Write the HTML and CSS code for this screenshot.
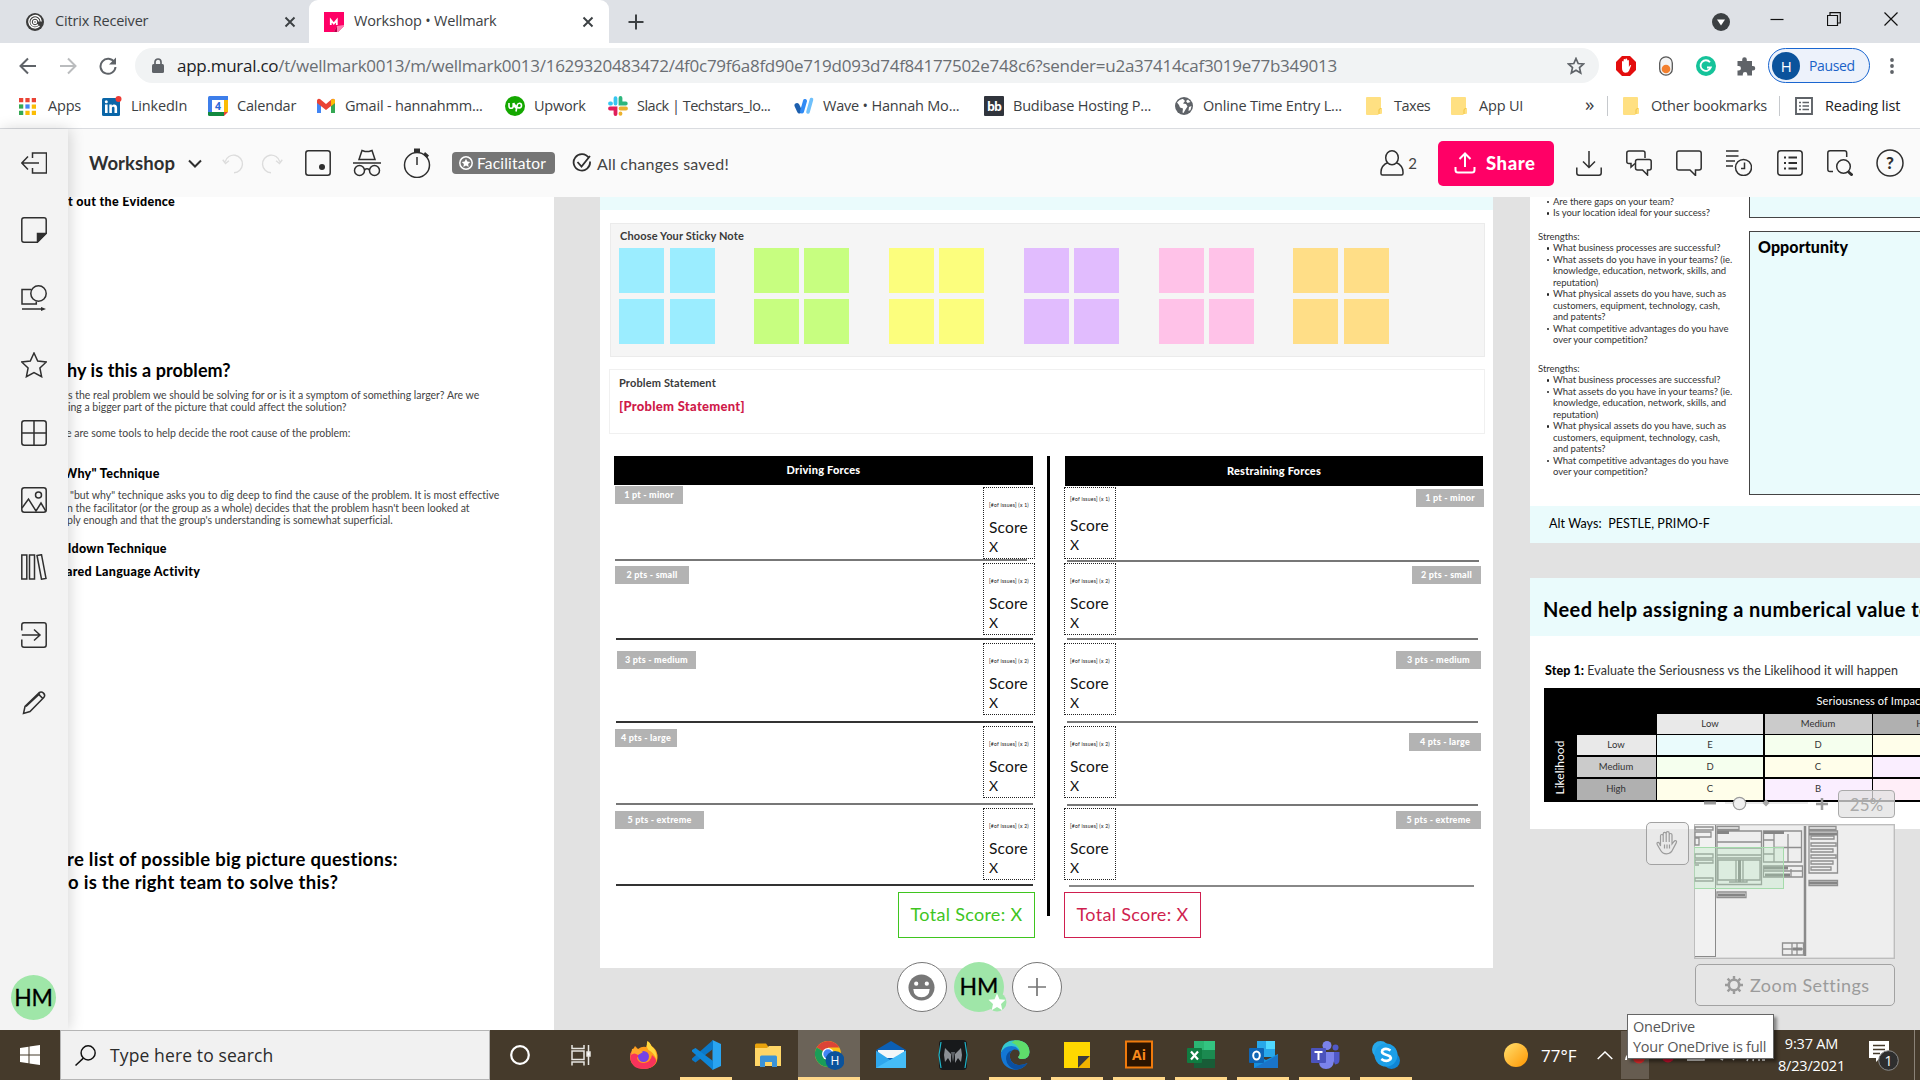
FILE: index.html
```html
<!DOCTYPE html>
<html lang="en">
<head>
<meta charset="utf-8">
<title>Workshop • Wellmark</title>
<link rel="stylesheet" href="styles.css">
</head>
<body>
<div class="screen">
<header class="chrome">
  <div class="tabs">
    <div class="tab tab-idle">
      <svg class="i18" viewBox="0 0 18 18"><circle cx="9" cy="9" r="9" fill="#3c3c3c"/><g fill="none" stroke="#fff" stroke-width="1.4"><path d="M13.5 13a6.2 6.2 0 1 1 1.7-4.500"/><path d="M12 11.500a3.900 3.900 0 1 1 .9-3"/><circle cx="9" cy="9" r="1.500"/></g></svg>
      <span class="tab-name">Citrix Receiver</span>
      <svg class="x" viewBox="0 0 12 12"><path d="M1.500 1.500l9 9M10.500 1.500l-9 9"/></svg>
    </div>
    <div class="tab tab-on">
      <svg class="i20" viewBox="0 0 20 20"><path d="M0 0h20v14l-6 6H0z" fill="#ff0066"/><path d="M10 20l3-6 7-1v1l-6 6z" fill="#ff7fb2"/><path d="M10 20l3-6v6z" fill="#b8004a"/><path d="M6.800 13V8l3 3.500 3-3.500v5" fill="none" stroke="#fff" stroke-width="1.800"/></svg>
      <span class="tab-name">Workshop • Wellmark</span>
      <svg class="x" viewBox="0 0 12 12"><path d="M1.500 1.500l9 9M10.500 1.500l-9 9"/></svg>
    </div>
    <svg class="new-tab" viewBox="0 0 16 16"><path d="M8 0.500v15M0.500 8h15"/></svg>
    <div class="win">
      <svg class="i18" viewBox="0 0 18 18"><circle cx="9" cy="9" r="9" fill="#3c4043"/><path d="M5 6.500h8l-4 6z" fill="#fff"/></svg>
      <svg class="wb" viewBox="0 0 14 14"><path d="M0.500 7.500h13"/></svg>
      <svg class="wb" viewBox="0 0 14 14"><path d="M0.500 3.500h10v10h-10zM3 3V0.700h10.300V11H11"/></svg>
      <svg class="wb" viewBox="0 0 14 14"><path d="M0.500 0.500l13 13M13.500 0.500l-13 13"/></svg>
    </div>
  </div>
  <div class="nav">
    <svg class="nv" viewBox="0 0 18 18"><path d="M17 9H2M9 1.500L1.500 9 9 16.500"/></svg>
    <svg class="nv dim" viewBox="0 0 18 18"><path d="M1 9h15M9 1.500L16.500 9 9 16.500"/></svg>
    <svg class="nv" viewBox="0 0 18 18"><path d="M15.500 5.500A7.500 7.500 0 1 0 16.500 10"/><path d="M17 .5v7h-7z" fill="#5f6368" stroke="none"/></svg>
    <div class="omni">
      <svg class="lock" viewBox="0 0 12 16"><rect y="6" width="12" height="9" rx="1.500" fill="#5f6368"/><path d="M3 6V4a3 3 0 0 1 6 0v2" fill="none" stroke="#5f6368" stroke-width="1.700"/></svg>
      <span class="url"><b>app.mural.co</b>/t/wellmark0013/m/wellmark0013/1629320483472/4f0c79f6a8fd90e719d093d74f84177502e748c6?sender=u2a37414caf3019e77b349013</span>
      <svg class="i18 star" viewBox="0 0 18 18"><path d="M9 1.500l2.200 5 5.300.5-4 3.600 1.200 5.400L9 13.200 4.300 16l1.200-5.400-4-3.600 5.300-.5z" fill="none" stroke="#5f6368" stroke-width="1.700"/></svg>
    </div>
    <div class="exts">
      <svg class="i20" viewBox="0 0 20 20"><path d="M6 0h8l6 6v8l-6 6H6l-6-6V6z" fill="#e40d0d"/><path d="M6 12V6q0-1 .8-1t.8 1V4q0-1 .9-1t.9 1v-.7q0-.9.900-.9t.9.900V5q0-.9.900-.9t.8.900v6l.9-1.500q.6-.8 1.400-.2l-2.200 5.500q-.8 2-3.300 2Q6 16.800 6 12z" fill="#fff"/></svg>
      <svg class="i20" viewBox="0 0 20 20"><rect x="3.700" y=".8" width="12.600" height="18.400" rx="6.300" fill="#f4f4f4" stroke="#555" stroke-width="1.300"/><circle cx="10" cy="13" r="4.300" fill="#f37f2e"/></svg>
      <svg class="i20" viewBox="0 0 20 20"><circle cx="10" cy="10" r="10" fill="#15c39a"/><path d="M14 6.200a5.300 5.300 0 1 0 .8 5.300H11" fill="none" stroke="#fff" stroke-width="1.800"/></svg>
      <svg class="i20" viewBox="0 0 20 20"><path d="M1.500 5h4.700V3.500a2.300 2.300 0 0 1 4.600 0V5H16v5h1a2.200 2.200 0 0 1 0 4.500h-1v5h-4.700v-1.300a2.200 2.200 0 0 0-4.500 0v1.300H1.500v-5h1.200a2.200 2.200 0 0 0 0-4.500H1.500z" fill="#5f6368"/></svg>
    </div>
    <div class="paused"><i>H</i><span>Paused</span></div>
    <svg class="dots" viewBox="0 0 4 16"><circle cx="2" cy="2" r="1.900"/><circle cx="2" cy="8" r="1.900"/><circle cx="2" cy="14" r="1.900"/></svg>
  </div>
  <div class="marks">
    <div class="bm b-apps"><svg viewBox="0 0 16 16"><path d="M0 0h4v4H0zM6 0h4v4H6zM12 0h4v4h-4z" fill="#ea4335"/><path d="M0 6h4v4H0z" fill="#34a853"/><path d="M6 6h4v4H6z" fill="#4285f4"/><path d="M12 6h4v4h-4zM6 12h4v4H6zM12 12h4v4h-4z" fill="#fbbc04"/><path d="M0 12h4v4H0z" fill="#34a853"/></svg><span>Apps</span></div>
    <div class="bm b-in"><svg viewBox="0 0 20 20"><rect y="2" width="18" height="18" rx="1.500" fill="#0a66a8"/><path d="M3 8.500h2.600V17H3zM7.300 8.500h2.500v1.200c1.200-2 5.300-2 5.300 2V17h-2.600v-4.800c0-2-2.600-1.900-2.600 0V17H7.300z" fill="#fff"/><circle cx="4.300" cy="5.700" r="1.500" fill="#fff"/><circle cx="16.500" cy="3" r="3" fill="#ee3b34"/></svg><span>LinkedIn</span></div>
    <div class="bm b-cal"><svg viewBox="0 0 20 20"><path d="M0 1.500Q0 0 1.500 0H20v4H0z" fill="#3d7eea"/><path d="M0 4h4v12H0z" fill="#3d7eea"/><path d="M16 4h4v12h-4z" fill="#fbbc04"/><path d="M0 16h16v4H1.500Q0 20 0 18.500z" fill="#128a3f"/><path d="M16 16h4l-4 4z" fill="#ea4335"/><path d="M4 4h12v12H4z" fill="#fff"/><text x="10" y="14" text-anchor="middle" font-size="10.500" font-weight="700" font-family="Open Sans, sans-serif" fill="#2a66d8">4</text></svg><span>Calendar</span></div>
    <div class="bm b-gm"><svg viewBox="0 0 20 20"><path d="M1 4v13h4V8z" fill="#4285f4"/><path d="M19 4v13h-4V8z" fill="#34a853"/><path d="M1 4.500Q1.500 2 4 3l6 5 6-5q2.500-1 3 1.500V7l-9 7-9-7z" fill="#ea4335"/><path d="M15 4q3.500-2 4 .5V7l-4 3.200z" fill="#fbbc04"/></svg><span>Gmail - hannahmm...</span></div>
    <div class="bm b-up"><svg viewBox="0 0 20 20"><circle cx="10" cy="10" r="10" fill="#14a800"/><path d="M4 7v3.300q0 2 2 2t2.200-2V7q1 4 3.500 5.500M11 15.500l1.200-6.300q.5-2 2.300-2 2 0 2 2.300t-2.200 2.400Q11.500 12 8.500 7" fill="none" stroke="#fff" stroke-width="1.600"/></svg><span>Upwork</span></div>
    <div class="bm b-sl"><svg viewBox="0 0 20 20" fill="none" stroke-width="3.800" stroke-linecap="round"><path d="M7.500 2.200v5.300M2 7.500h1" stroke="#36c5f0"/><path d="M12.500 2v5.500h5.300" stroke="#2eb67d"/><path d="M12.500 12.500H18M12.500 17.500v.3" stroke="#ecb22e"/><path d="M2 12.500h5.500V18" stroke="#e01e5a"/></svg><span>Slack | Techstars_lo...</span></div>
    <div class="bm b-wv"><svg viewBox="0 0 20 20" fill="none" stroke-linecap="round"><path d="M3 9.500L5.500 15" stroke="#1c5fae" stroke-width="5"/><path d="M11 5L8 15.500" stroke="#2f8af5" stroke-width="4"/><path d="M17.500 3.500L14 16" stroke="#6fc0fb" stroke-width="3.600"/></svg><span>Wave • Hannah Mo...</span></div>
    <div class="bm b-bb"><svg viewBox="0 0 20 20"><rect width="20" height="20" rx="1" fill="#30343c"/><text x="10" y="15" text-anchor="middle" font-size="12.500" font-weight="700" font-family="Open Sans, sans-serif" fill="#fff" letter-spacing="-.8">bb</text></svg><span>Budibase Hosting P...</span></div>
    <div class="bm b-gl"><svg viewBox="0 0 20 20"><circle cx="10" cy="10" r="9" fill="#5f6368"/><path d="M3 6.500q3-4 6-3.500l2 2-2 2.500 3 .5 1.500 2.500-2 3-2 3.500-1-.5.500-4-3-1-1-2.500z" fill="#fff"/><path d="M14 3.500l2.500 2.500-3 1-1.500-2zM15 11l2.500-1-1 4-2 1z" fill="#fff"/></svg><span>Online Time Entry L...</span></div>
    <div class="bm b-tx"><svg viewBox="0 0 16 18"><use href="#folder"/></svg><span>Taxes</span></div>
    <div class="bm b-ui"><svg viewBox="0 0 16 18"><use href="#folder"/></svg><span>App UI</span></div>
    <div class="more">»</div>
    <div class="bm b-ot"><svg viewBox="0 0 16 18"><use href="#folder"/></svg><span>Other bookmarks</span></div>
    <div class="bm b-rl"><svg viewBox="0 0 18 18"><path d="M1 1h16v16H1z" fill="none" stroke="#5f6368" stroke-width="1.900"/><path d="M4 5.500h2M4 9h2M4 12.500h2M7.500 5.500H14M7.500 9H14M7.500 12.500H14" stroke="#5f6368" stroke-width="1.600"/></svg><span>Reading list</span></div>
  </div>
</header>
<svg class="defs"><defs>
  <g id="folder"><path d="M1 0h13q1 0 1 1v10h1v5q0 1-1 1h-2l-1 1H1q-1 0-1-1V1q0-1 1-1z" fill="#ffe082"/><path d="M13 17v-4q0-1.500 2-1.500" fill="none" stroke="#f2c744"/></g>
</defs></svg>

<main class="app">
  <aside class="rail">
    <svg class="ri" viewBox="0 0 26 26"><path d="M11.500 8V3h14v20h-14v-5M18 13H1.500M7 6.500L.8 13 7 19.500"/></svg>
    <svg class="ri" viewBox="0 0 26 26"><path d="M3 .8h20q2.200 0 2.200 2.200v13.200l-9 9H3Q.8 25.200.8 23V3Q.8.800 3 .8z"/><path d="M16.500 25v-8.500H25z" fill="#2f2f2f"/></svg>
    <svg class="ri" viewBox="0 0 26 26"><path d="M10.500 4.500H1V19h14.300v-2.500M1 24h20"/><circle cx="17.500" cy="8.500" r="7.700"/><path d="M20 22l5 2-5 2z" fill="#2f2f2f" stroke="none"/></svg>
    <svg class="ri" viewBox="0 0 26 26"><path d="M13 1l3.700 8 8.600 1-6.400 6 1.700 8.700L13 20.500l-7.600 4.200L7.100 16 .7 10l8.600-1z"/></svg>
    <svg class="ri" viewBox="0 0 26 26"><rect x=".8" y=".8" width="24.400" height="24.400" rx="2.500"/><path d="M13 1v24M1 13h24"/></svg>
    <svg class="ri" viewBox="0 0 26 26"><rect x=".8" y=".8" width="24.400" height="24.400" rx="2.500"/><circle cx="17.500" cy="8" r="3"/><path d="M1 21l6.500-9 7.500 12 5-8 5 8.500"/></svg>
    <svg class="ri" viewBox="0 0 26 26"><rect x=".8" y="1" width="5" height="24"/><rect x="8.500" y="1" width="5" height="24"/><path d="M16 1.500l4.500-.8 4.500 23.700-4.500.8z"/></svg>
    <svg class="ri" viewBox="0 0 26 26"><path d="M.8 8.500V3Q.8.800 3 .8h20q2.200 0 2.200 2.200v20q0 2.200-2.200 2.200H3Q.8 25.200.8 23v-5.500M.8 13h17M13 7.500l6 5.500-6 5.500"/></svg>
    <svg class="ri" viewBox="0 0 26 26"><path d="M2.500 24.500l1.500-7L18 3.700q2.300-1.700 4.500.4t.3 4.500L9 22.500zM17 4.800l5 4.800M5 17.500l14-13"/></svg>
    <div class="me">HM</div>
  </aside>

  <section class="work">
    <div class="bar">
      <h1 class="title">Workshop</h1>
      <svg class="chev" viewBox="0 0 14 9"><path d="M1 1.500l6 6 6-6"/></svg>
      <svg class="ti faint undo" viewBox="0 0 26 26"><path d="M13 23.500a9.500 9.500 0 1 0-9.500-12M.8 9.500l3 4 3.700-3"/></svg>
      <svg class="ti faint redo" viewBox="0 0 26 26"><path d="M13 23.500a9.500 9.500 0 1 1 9.500-12M25.200 9.500l-3 4-3.700-3"/></svg>
      <svg class="ti sq" viewBox="0 0 26 26"><rect x=".8" y=".8" width="24.400" height="24.400" rx="2.500"/><circle cx="17" cy="17" r="3" fill="#2f2f2f" stroke="none"/></svg>
      <svg class="ti inc" viewBox="0 0 28 28"><path d="M0 14h28M6 10.500L9 1.500l3 1h4l3-1 3 9z"/><circle cx="6.500" cy="21.500" r="5"/><circle cx="21.500" cy="21.500" r="5"/><path d="M11.500 21q2.500-2.500 5 0"/></svg>
      <svg class="ti tim" viewBox="0 0 28 30"><circle cx="14" cy="17" r="12.500"/><path d="M14 9v8"/><path d="M11 .5h6V4h-6zM22 4l4 3.500-2 2.500-3.500-3.500z" fill="#2f2f2f" stroke="none"/></svg>
      <div class="fac"><svg viewBox="0 0 14 14"><circle cx="7" cy="7" r="6.200" fill="none" stroke="#fff" stroke-width="1.500"/><path d="M7 2.800l1.300 2.800 3 .3-2.200 2 .6 3.100L7 9.500 4.300 11l.6-3.100-2.200-2 3-.3z" fill="#fff"/></svg><span>Facilitator</span></div>
      <svg class="ok" viewBox="0 0 20 20"><path d="M16.800 5A8.200 8.200 0 1 0 18 8.500M5.500 9l4 4.500L18 3"/></svg>
      <span class="saved">All changes saved!</span>
      <div class="right">
        <svg class="ti person" viewBox="0 0 24 26"><path d="M8 12.500Q1 15.500 1 22v1.500Q1 25 2.500 25h19q1.500 0 1.500-1.500V22q0-6.500-7-9.500"/><ellipse cx="12" cy="7.800" rx="6.300" ry="7"/></svg>
        <span class="cnt">2</span>
        <div class="share"><svg viewBox="0 0 22 22"><path d="M11 15V2M5.500 7L11 1.500 16.500 7M1.500 15v3q0 2.500 2.500 2.500h14q2.500 0 2.500-2.500v-3"/></svg><span>Share</span></div>
        <div class="tools">
        <svg class="ti" viewBox="0 0 26 26"><path d="M13 1v16M7 11.500l6 6 6-6M.8 17.500V23q0 2.200 2.200 2.200h20q2.200 0 2.200-2.200v-5.500"/></svg>
        <svg class="ti" viewBox="0 0 26 26"><path d="M9 13.500l-4 3.500v-3.500H3Q.8 13.500.8 11.500V3Q.8 1 3 1h14q2 0 2 2v5"/><path d="M11.500 9.500h11.700q2 0 2 2V18q0 2-2 2h-1.700v5l-5-5h-5q-2 0-2-2v-6.500q0-2 2-2z"/></svg>
        <svg class="ti" viewBox="0 0 26 26"><path d="M3 1h20q2.200 0 2.200 2.200V18q0 2-2.200 2h-3.500v5.500L14 20H3Q.8 20 .8 18V3.200Q.8 1 3 1z"/></svg>
        <svg class="ti" viewBox="0 0 26 26"><path d="M0 1h12.500M0 6h12.500M0 11h9M0 16h7"/><circle cx="17.500" cy="17.500" r="8"/><path d="M18.500 12.500v6h-3.500"/></svg>
        <svg class="ti" viewBox="0 0 26 26"><rect x=".8" y=".8" width="24.400" height="24.400" rx="3"/><path d="M7 7.500h2M7 13h2M7 18.500h2M11.500 7.500H20M11.500 13H20M11.500 18.500H20" stroke-width="2"/></svg>
        <svg class="ti" viewBox="0 0 26 26"><path d="M6 21.500H3Q.8 21.500.8 19V3Q.8.800 3 .8h14.500Q19.700.8 19.700 3v4"/><circle cx="16.500" cy="16.500" r="6.800"/><path d="M21 21.500l4.500 4" stroke-width="2.800"/></svg>
        <svg class="ti help" viewBox="0 0 28 28"><circle cx="14" cy="14" r="13"/><text x="14" y="20" text-anchor="middle" font-size="17" font-weight="900" font-family="Lato, sans-serif" fill="#2f2f2f" stroke="none">?</text></svg>
        </div>
      </div>
    </div>

    <div class="canvas"><div class="board">
      <div class="frame f-left"></div>
      <p class="t h12 l1">t out the Evidence</p>
      <p class="t h19 l2">hy is this a problem?</p>
      <p class="t p11 l3">s the real problem we should be solving for or is it a symptom of something larger? Are we</p>
      <p class="t p11 l4">ing a bigger part of the picture that could affect the solution?</p>
      <p class="t p11 l5">e are some tools to help decide the root cause of the problem:</p>
      <p class="t h12 l6">Why" Technique</p>
      <p class="t p11 l7">"but why" technique asks you to dig deep to find the cause of the problem. It is most effective</p>
      <p class="t p11 l8">n the facilitator (or the group as a whole) decides that the problem hasn't been looked at</p>
      <p class="t p11 l9">ply enough and that the group's understanding is somewhat superficial.</p>
      <p class="t h12 l10">ldown Technique</p>
      <p class="t h12 l11">ared Language Activity</p>
      <p class="t h18 l12">re list of possible big picture questions:</p>
      <p class="t h18 l13">o is the right team to solve this?</p>

      <div class="frame f-mid"></div>
      <div class="strip"></div>
      <div class="panel p-notes"></div>
      <p class="t lab lb1">Choose Your Sticky Note</p>
      <div class="notes">
        <div class="pack cy"><i></i><i></i><i></i><i></i></div>
        <div class="pack gr"><i></i><i></i><i></i><i></i></div>
        <div class="pack ye"><i></i><i></i><i></i><i></i></div>
        <div class="pack pu"><i></i><i></i><i></i><i></i></div>
        <div class="pack pi"><i></i><i></i><i></i><i></i></div>
        <div class="pack og"><i></i><i></i><i></i><i></i></div>
      </div>
      <div class="panel p-prob"></div>
      <p class="t lab lb2">Problem Statement</p>
      <p class="t prob">[Problem Statement]</p>

      <div class="head hd-l"><span>Driving Forces</span></div>
      <div class="head hd-r"><span>Restraining Forces</span></div>
      <div class="axis"></div>

      <div class="tag a1">1 pt - minor</div>
      <div class="tag a2">2 pts - small</div>
      <div class="tag a3">3 pts - medium</div>
      <div class="tag a4">4 pts - large</div>
      <div class="tag a5">5 pts - extreme</div>
      <div class="tag z1">1 pt - minor</div>
      <div class="tag z2">2 pts - small</div>
      <div class="tag z3">3 pts - medium</div>
      <div class="tag z4">4 pts - large</div>
      <div class="tag z5">5 pts - extreme</div>

      <i class="ln n1"></i><i class="ln n2"></i><i class="ln n3"></i><i class="ln n4"></i><i class="ln n5"></i>
      <i class="ln m1"></i><i class="ln m2"></i><i class="ln m3"></i><i class="ln m4"></i><i class="ln m5"></i>

      <div class="score sl s1"><small>[#of issues] (x 1)</small><b>Score</b><em>X</em></div>
      <div class="score sl s2"><small>[#of issues] (x 2)</small><b>Score</b><em>X</em></div>
      <div class="score sl s3"><small>[#of issues] (x 2)</small><b>Score</b><em>X</em></div>
      <div class="score sl s4"><small>[#of issues] (x 2)</small><b>Score</b><em>X</em></div>
      <div class="score sl s5"><small>[#of issues] (x 2)</small><b>Score</b><em>X</em></div>
      <div class="score sr s1 up"><small>[#of issues] (x 1)</small><b>Score</b><em>X</em></div>
      <div class="score sr s2"><small>[#of issues] (x 2)</small><b>Score</b><em>X</em></div>
      <div class="score sr s3"><small>[#of issues] (x 2)</small><b>Score</b><em>X</em></div>
      <div class="score sr s4"><small>[#of issues] (x 2)</small><b>Score</b><em>X</em></div>
      <div class="score sr s5"><small>[#of issues] (x 2)</small><b>Score</b><em>X</em></div>

      <div class="total tg"><span>Total Score: X</span></div>
      <div class="total tr"><span>Total Score: X</span></div>

      <div class="frame f-swot"></div>
      <div class="swot">
        <p class="li">Are there gaps on your team?</p>
        <p class="li">Is your location ideal for your success?</p>
        <h4>Strengths:</h4>
        <p class="li">What business processes are successful?</p>
        <p class="li">What assets do you have in your teams? (ie.</p>
        <p>knowledge, education, network, skills, and</p>
        <p>reputation)</p>
        <p class="li">What physical assets do you have, such as</p>
        <p>customers, equipment, technology, cash,</p>
        <p>and patents?</p>
        <p class="li">What competitive advantages do you have</p>
        <p>over your competition?</p>
        <h4 class="second">Strengths:</h4>
        <p class="li">What business processes are successful?</p>
        <p class="li">What assets do you have in your teams? (ie.</p>
        <p>knowledge, education, network, skills, and</p>
        <p>reputation)</p>
        <p class="li">What physical assets do you have, such as</p>
        <p>customers, equipment, technology, cash,</p>
        <p>and patents?</p>
        <p class="li">What competitive advantages do you have</p>
        <p>over your competition?</p>
      </div>
      <div class="quad q1"></div>
      <div class="quad q2"><span>Opportunity</span></div>
      <div class="alt"><span>Alt Ways: &nbsp;PESTLE, PRIMO-F</span></div>

      <div class="frame f-help"></div>
      <div class="need">Need help assigning a numberical value to</div>
      <p class="t step"><b>Step 1:</b> Evaluate the Seriousness vs the Likelihood it will happen</p>
      <div class="matrix">
        <div class="mh">Seriousness of Impact</div>
        <div class="lk"><span>Likelihood</span></div>
        <div class="g1 c3">Low</div><div class="g2 c4">Medium</div><div class="g3 c5">High</div>
        <div class="g1 c2">Low</div><div class="mc c3">E</div><div class="mg c4">D</div><div class="my c5"></div>
        <div class="g2 c2">Medium</div><div class="mg c3">D</div><div class="my c4">C</div><div class="mp c5"></div>
        <div class="g3 c2">High</div><div class="my c3">C</div><div class="mp c4">B</div><div class="mk c5"></div>
      </div>
      </div>

      <svg class="zoomer" viewBox="0 0 126 16"><g stroke="#9b9b9b" fill="none"><path d="M1 7h12" stroke-width="3"/><path d="M125 8h-12M119 2v12" stroke-width="2.500"/><path d="M22 7h83" stroke="#d6d6d6"/><circle cx="36.500" cy="7.500" r="6.200" fill="#f0f0f0" stroke-width="1.300"/><path d="M63 3.500l3.500 3.500-3.500 3.500L59.500 7z" fill="#a8a8a8" stroke="none"/></g></svg>
      <div class="pct"><span>25%</span></div>
      <div class="hand"><svg viewBox="0 0 22 24" fill="none" stroke="#9b9b9b" stroke-width="1.200"><path d="M4.500 15V5q0-1.500 1.300-1.500T7.200 5v6V3q0-1.600 1.500-1.600T10.200 3v8V2.200Q10.200.7 11.700.700t1.500 1.500V11 4q0-1.500 1.400-1.500T16 4v9l2-2.500q1.300-1.500 2.300-.6.700.7-.2 2.200L17 18q-2 4.800-6.500 4.800-4 0-5.800-3.300L1.500 14Q.5 12 1.500 11.500q1.200-.5 2 1zM8.500 13.500v4M11 13.500v4M13.500 13.500v4"/></svg></div>
      <svg class="mini" viewBox="0 0 201 135">
        <rect x=".7" y=".7" width="199.600" height="133.600" fill="#eeeeee" stroke="#bdbdbd" stroke-width="1.400"/>
        <path d="M1 1h20.500v132H1z" fill="#f1f1f1"/>
        <path d="M21.500 1v132M1 132.500h20" stroke="#8a8a8a"/><path d="M111 2v130" stroke="#8a8a8a" stroke-width="2.500"/>
        <g fill="none" stroke="#8f8f8f" stroke-width="1.300">
          <path d="M1 3h18v3H1zM1 8h16v5H1zM1 14h4v7H1zM1 30h18v4H1zM1 36h18v3H1zM1 41h4M1 54h18v3H1z"/>
          <path d="M23 2.500h22v3H23zM23 7h44.500v53.500H23zM23 18h44M23 24h44M23 31h44M23 34h44M24 36h42v20H24zM42 36v22M49 36v22M35 58h18v-2"/>
          <path d="M69.500 7h38v31h-38zM80 10v28M94 10v28M80 23.500h28M70 16h10M70 30h10M69.500 42h39v11h-39zM69.500 47h39M97 45v8"/>
          <path d="M115 2.500h27v3h-27zM115 7h28.500v42H115zM117 12h23v3h-23zM117 19h25v3h-25zM117 25h22v3h-22zM117 31h25v3h-25zM117 37h22v3h-22zM117 43h20v3h-20zM115 56.500h28.500v5H115zM23 68h29v5.500H23zM88.500 119h21v12h-21zM98 119v12M103 119v12M88.500 125h21"/>
        </g>
        <g stroke="#858585" stroke-width="3"><path d="M23 8.500h12M70 8.500h20M115 10h28M45.500 36v22M70 44h24M71 51h25M115 59h28M24 71h27M99 125h9" /></g>
        <rect x="0" y="23.500" width="89.500" height="41" fill="#b9e8c0" fill-opacity=".32" stroke="#a5dbab" stroke-width="1"/>
      </svg>
      <div class="zset"><svg viewBox="0 0 18 18"><circle cx="9" cy="9" r="5.200" fill="none" stroke="#9b9b9b" stroke-width="2.600"/><path d="M9 0v3M9 15v3M0 9h3M15 9h3M2.600 2.600l2.200 2.200M13.200 13.200l2.200 2.200M2.600 15.400l2.200-2.200M13.200 4.800l2.200-2.200" stroke="#9b9b9b" stroke-width="2.400"/></svg><span>Zoom Settings</span></div>
      <div class="crew">
        <div class="cb"><svg viewBox="0 0 28 28"><circle cx="14" cy="14" r="13.500" fill="#777"/><circle cx="8.500" cy="10" r="2.200" fill="#fff"/><circle cx="19.500" cy="10" r="2.200" fill="#fff"/><path d="M5.500 15.500h17q-.5 8.500-8.500 8.500t-8.500-8.500z" fill="#fff"/></svg></div>
        <div class="cb hm">HM<svg viewBox="0 0 20 20"><circle cx="10" cy="10" r="9.500" fill="#9fe6a8"/><path d="M10 1.500l2.500 5.700 6 .6-4.500 4.200 1.300 6.200L10 15l-5.300 3.200L6 12 1.500 7.800l6-.6z" fill="#fff"/></svg></div>
        <div class="cb"><svg class="pl" viewBox="0 0 18 18"><path d="M9 0v18M0 9h18" stroke="#777" stroke-width="1.700"/></svg></div>
      </div>
    </div>
  </section>
</main>

<footer class="task">
  <div class="start"><svg viewBox="0 0 20 20"><path d="M0 3l8.500-1.200v7.700H0zM9.500 1.600L20 0v9.500H9.500zM0 10.500h8.500v7.700L0 17zM9.500 10.500H20V20l-10.500-1.600z" fill="#fff"/></svg></div>
  <div class="find"><svg viewBox="0 0 20 20"><circle cx="12.500" cy="7.500" r="6.700"/><path d="M8 12.500L.5 19.500"/></svg><span>Type here to search</span></div>
  <div class="apps">
    <div class="ap"><svg viewBox="0 0 30 30"><circle cx="15" cy="15" r="8.800" fill="none" stroke="#fff" stroke-width="2.200"/></svg></div>
    <div class="ap"><svg viewBox="0 0 30 30" fill="none" stroke="#e8e6e2" stroke-width="1.500"><path d="M5 11h12v8.500H5zM5 5v3.500h12V5M5 25.500V22h12v3.500M21.500 5v20"/><path d="M20 12h3v4h-3z" fill="#fff"/></svg></div>
    <div class="ap"><svg viewBox="0 0 30 30"><path d="M3 11q2-3 3-5l3 3q4-3 8-2 2-3 1.500-6 3 2 4 5 5 3 6 9 1 13-13.500 14Q1 28 1 16q0-3 2-5z" fill="#ff9c1c"/><path d="M1.500 13Q4 10 8 12q3 1 4 3-3 1-4 3 1 5 7 5 7-1 8-8 5 4 4 7-3 7-12 7Q3 29 1.300 19z" fill="#f7335b"/><circle cx="14.500" cy="16.500" r="5.500" fill="#7542e5"/><path d="M3 9q5-2 11 3l-5 3q-4-3-7 0z" fill="#ffa62b"/><path d="M18.500 1q3 2 4 5 6 5 5 14-2-7-8-10-3-4-1-9z" fill="#ffd83d"/></svg></div>
    <div class="ap run"><svg viewBox="0 0 30 30"><path d="M21.500 0L30 4v22l-8.500 4z" fill="#2aa4f0"/><path d="M22 0v9L4.500 22.500 1 20v-1.500z" fill="#0b78c8"/><path d="M22 30v-9L4.500 8 1 10v1.500z" fill="#0e86d8"/></svg></div>
    <div class="ap"><svg viewBox="0 0 30 30"><path d="M2 5q0-1.500 1.500-1.500H13L15.500 7H28v19H2z" fill="#e8a20c"/><path d="M2 8h12l2-2h12v20H2z" fill="#ffd667"/><path d="M7 27V17q0-1.500 1.500-1.500h14Q24 15.500 24 17v10h-5v-5h-7v5z" fill="#3b93d8"/></svg></div>
    <div class="ap run on"><svg viewBox="0 0 30 30"><circle cx="14" cy="14" r="13" fill="#fbc116"/><path d="M14 14L2.700 7.500A13 13 0 0 1 25.300 7.500H14z" fill="#dc4437"/><path d="M14 14L2.700 7.500A13 13 0 0 0 14 27l5-9z" fill="#1a9d58"/><circle cx="14" cy="14" r="6" fill="#fff"/><circle cx="14" cy="14" r="4.700" fill="#4285f4"/><circle cx="21" cy="20.500" r="9.500" fill="#0b539c"/><text x="21" y="25" text-anchor="middle" font-size="12" font-family="Open Sans, sans-serif" fill="#fff">H</text></svg></div>
    <div class="ap"><svg viewBox="0 0 30 30"><path d="M0 10L15 1l15 9-15 11z" fill="#0b5fb5"/><path d="M2 10h26v8H2z" fill="#f4f6f8"/><path d="M0 10.500L15 20.500 30 10.500v17.500H0z" fill="#2ea6ec"/><path d="M0 28L30 10.500V28z" fill="#45bcf7"/></svg></div>
    <div class="ap"><svg viewBox="0 0 30 30"><rect x="1" y="0" width="28" height="30" rx="4" fill="#17191b"/><path d="M3 2l-2 13 2 13M27 2l2 13-2 13" stroke="#1fb4c8" stroke-width="1.200" fill="none"/><path d="M7 8l6 6v9l-3-5-3 4-1-7zM23 8l-6 6v9l3-5 3 4 1-7z" fill="#8b8f94"/><path d="M13 12h4l-2 10z" fill="#5c6065"/></svg></div>
    <div class="ap run"><svg viewBox="0 0 30 30"><path d="M.8 13Q2.500.5 15 .3 29 .8 29.500 12q-.3 7-7 7-5 0-4-2.500 2-2 1-5Q17 7.500 12 7.500 4 8 .8 13z" fill="#35c7d0"/><path d="M15 .3Q29 .8 29.500 12q-.3 7-7 7-5 0-4-2.500 2-2 1-5 0-6-8-9z" fill="#5fdc6b"/><path d="M.8 13Q4 6 11.500 6q7 .5 8 6-2-3-5.500-2.500-5 2-4 8.500 1.500 6 8 7 5 .5 9.500-2Q23 29.500 15.500 29.700 1 28.500.8 13z" fill="#1377d4"/><path d="M10 18q-1-5 2-7.500Q6 12 6 19q1 8 9.500 10.700 7-.2 12-6.700-4.500 2.500-9.500 2-6.500-1-8-7z" fill="#0a4fa0"/></svg></div>
    <div class="ap run"><svg viewBox="0 0 30 30"><path d="M2 2h26v14l-12 12H2z" fill="#ffd800"/><path d="M16 28V16h12z" fill="#3c3c3c"/><path d="M16 28l12-12v12z" fill="#f0b400"/></svg></div>
    <div class="ap run"><svg viewBox="0 0 30 30"><rect x="2" y="1.500" width="26" height="26" fill="#2b1400" stroke="#f07a0c" stroke-width="2"/><text x="15" y="20" text-anchor="middle" font-size="14" font-weight="700" font-family="Open Sans, sans-serif" fill="#f98a1c">Ai</text></svg></div>
    <div class="ap run"><svg viewBox="0 0 30 30"><path d="M8 1h21v9H8z" fill="#2bb673"/><path d="M18 1h11v9H18z" fill="#33c481"/><path d="M8 10h21v9H8z" fill="#1b8a50"/><path d="M8 19h21v9H8z" fill="#185c37"/><rect x="1" y="8" width="15" height="15" rx="1" fill="#107c41"/><path d="M5 11.500l7 8M12 11.500l-7 8" stroke="#fff" stroke-width="2.200"/></svg></div>
    <div class="ap run"><svg viewBox="0 0 30 30"><path d="M9 1h18v16H9z" fill="#28a8ea"/><path d="M18 1h9v8h-9z" fill="#50d9ff"/><path d="M6 14l12 6 12-6v14H6z" fill="#1490df"/><path d="M6 28l24-13v13z" fill="#1a74c8"/><rect x="1" y="8" width="15" height="15" rx="1" fill="#0f65b5"/><ellipse cx="8.500" cy="15.500" rx="3.300" ry="4" fill="none" stroke="#fff" stroke-width="2"/></svg></div>
    <div class="ap run"><svg viewBox="0 0 30 30"><circle cx="17" cy="5.500" r="4.500" fill="#7b83eb"/><circle cx="25.500" cy="7.500" r="3" fill="#5059c9"/><path d="M20 12h9.500v8q0 4-4.500 4.500z" fill="#5059c9"/><path d="M9 12h15v9q-1 8-8 8t-7-8z" fill="#7b83eb"/><rect x="1" y="8" width="15" height="15" rx="1" fill="#4b53bc"/><path d="M4.500 12h8M8.500 12v8" stroke="#fff" stroke-width="2"/></svg></div>
    <div class="ap run"><svg viewBox="0 0 30 30"><circle cx="9.500" cy="9.500" r="8.500" fill="#28a8ea"/><circle cx="20.500" cy="20.500" r="8.500" fill="#0f86d6"/><circle cx="15" cy="15" r="11.500" fill="#1c9fe8"/><path d="M19.500 10.500q-4.500-3-8-.5-1.800 3.500 3.500 4.700 6 1.300 4.300 4.600-3.800 3.400-9-.3" fill="none" stroke="#fff" stroke-width="2.700"/></svg></div>
  </div>
  <div class="tray">
    <i class="sun"></i><span class="temp">77°F</span>
    <svg class="caret" viewBox="0 0 16 9"><path d="M.7 8L8 1l7.300 7"/></svg>
    <svg class="sys" viewBox="0 0 160 48"><rect width="28" height="48" fill="#665c50"/><path d="M5 29q0-5 6-6" stroke="#fff" stroke-width="2" fill="none"/><circle cx="18" cy="26" r="6.500" fill="#e02b2b"/><circle cx="47" cy="25" r="6.500" fill="#c8102e"/><path d="M66 29h17v-9M97 26l5 3M112 29q4-5 3-9M126 30l2-5M132 30l1-5M138 30v-3M141 29h3" stroke="#fff" stroke-width="1.500" fill="none"/></svg>
    <div class="clock"><span>9:37 AM</span><span>8/23/2021</span></div>
    <svg class="bell" viewBox="0 0 30 32"><path d="M0 0h20v17h-9l-4 4v-4H0z" fill="#fff"/><path d="M4 4.500h12M4 8.500h12M4 12.500h7" stroke="#453a2b" stroke-width="1.300"/><circle cx="19.500" cy="19.500" r="9.800" fill="#2e2e2e" stroke="#8a8a8a"/><text x="19.500" y="24.500" text-anchor="middle" font-size="14" font-family="Open Sans, sans-serif" fill="#fff">1</text></svg>
    <i class="peek"></i>
  </div>
  <div class="tip"><span>OneDrive</span><span>Your OneDrive is full</span></div>
</footer>
</div>
</body>
</html>
```
FILE: styles.css
```css
* { box-sizing: border-box; margin: 0; padding: 0; }
body { width: 1920px; height: 1080px; overflow: hidden; font-family: "Open Sans", "Noto Sans", sans-serif; }
svg { display: block; flex: none; }
.defs { position: absolute; width: 0; height: 0; }
.screen { position: relative; width: 1920px; height: 1080px; display: flex; flex-direction: column; overflow: hidden; background: #e2e2e2; }
.i18 { width: 18px; height: 18px; }
.i20 { width: 20px; height: 20px; }

/* browser chrome */
.chrome { height: 129px; flex: none; background: #fff; border-bottom: 1px solid #dadce0; }
.tabs { height: 43px; background: #dee1e6; display: flex; align-items: center; }
.tab { height: 43px; display: flex; align-items: center; }
.tab-idle { width: 309px; padding: 0 13px 0 26px; }
.tab-on { width: 300px; padding: 0 15px; background: #fff; border-radius: 9px 9px 0 0; }
.tab-name { flex: 1; margin-left: 11px; padding-bottom: 2px; font-size: 14.5px; color: #3c4043; white-space: nowrap; letter-spacing: -.18px; }
.tab-on .tab-name { margin-left: 10px; }
.x { width: 12px; height: 12px; stroke: #3c4043; stroke-width: 1.9; fill: none; }
.new-tab { width: 16px; height: 16px; margin-left: 19px; stroke: #3c4043; stroke-width: 2; }
.win { margin-left: auto; display: flex; align-items: center; padding-right: 22px; }
.wb { width: 14px; height: 14px; fill: none; stroke: #111; stroke-width: 1.2; margin: 0 0 6px 43px; }
.win .i18 + .wb { margin-left: 40px; }
.nav { height: 45px; display: flex; align-items: center; padding-left: 19px; }
.nv { width: 18px; height: 18px; margin-right: 22px; fill: none; stroke: #5f6368; stroke-width: 2; }
.nv.dim { stroke: #babcbe; }
.omni { width: 1464px; height: 35px; margin-left: -4px; border-radius: 18px; background: #f1f3f4; display: flex; align-items: center; padding: 0 14px 0 17px; }
.lock { width: 12px; height: 16px; margin-right: 13px; }
.url { font-size: 17px; color: #6a6e73; white-space: nowrap; letter-spacing: -.26px; padding-bottom: 1px; }
.url b { font-weight: 400; color: #202124; }
.star { margin-left: auto; }
.exts { display: flex; gap: 20px; margin-left: 17px; }
.paused { width: 102px; height: 35px; margin-left: 12px; border: 1.5px solid #1a66d0; border-radius: 18px; background: #edf2fb; display: flex; align-items: center; color: #1a62c8; font-size: 14px; letter-spacing: -.35px; }
.paused i { width: 28px; height: 28px; margin: 0 9px 0 3px; border-radius: 50%; background: #0b539c; color: #fff; font-style: normal; text-align: center; line-height: 28px; font-size: 15px; }
.dots { width: 4px; height: 16px; margin-left: 20px; fill: #5f6368; }
.marks { height: 36px; display: flex; align-items: center; padding-left: 19px; font-size: 14.5px; letter-spacing: -.2px; color: #3c4043; }
.bm { display: flex; align-items: center; flex: none; white-space: nowrap; }
.bm svg { width: 20px; height: 20px; margin-right: 9px; }
.bm span { padding-bottom: 1px; }
.b-apps { width: 83px; } .b-apps svg { width: 17px; height: 17px; margin-right: 12px; }
.b-in { width: 106px; }
.b-cal { width: 108px; }
.b-gm { width: 189px; }
.b-up { width: 103px; }
.b-sl { width: 186px; letter-spacing: -.5px; }
.b-wv, .b-bb { width: 190px; }
.b-gl { width: 192px; }
.b-tx svg, .b-ui svg, .b-ot svg { width: 16px; height: 18px; margin-right: 12px; }
.b-tx { width: 85px; letter-spacing: -.5px; }
.b-ui { width: 134px; }
.more { width: 22px; font-size: 19px; line-height: 20px; margin-top: -4px; }
.b-ot { width: 172px; padding-left: 15px; border-left: 1px solid #c6c9cd; height: 20px; }
.b-rl { padding-left: 15px; border-left: 1px solid #c6c9cd; height: 20px; color: #202124; }
.b-rl svg { width: 18px; height: 18px; margin-right: 12px; }

/* application shell */
.app { height: 901px; flex: none; display: grid; grid-template-columns: 68px 1852px; font-family: Lato, "Noto Sans", sans-serif; }
.rail { position: relative; z-index: 3; background: #f3f3f3; box-shadow: 2px 0 14px rgba(0,0,0,.16); display: flex; flex-direction: column; align-items: center; padding-top: 21px; }
.ri { width: 26px; height: 26px; margin-bottom: 41.4px; fill: none; stroke: #2f2f2f; stroke-width: 1.5; }
.me { width: 45px; height: 45px; margin-top: auto; margin-bottom: 10px; margin-right: 1px; border-radius: 50%; background: #9fe6a8; font: 23px/45px Lato, sans-serif; text-align: center; letter-spacing: -.3px; -webkit-text-stroke: .3px #000; }
.work { display: grid; grid-template-rows: 68px 833px; position: relative; }
.bar { background: #fafafa; display: flex; align-items: center; padding-left: 21px; color: #2f2f2f; }
.title { font-size: 18.5px; font-weight: 700; width: 86px; margin-right: 13px; letter-spacing: .07px; }
.chev { width: 14px; height: 9px; fill: none; stroke: #2f2f2f; stroke-width: 2; }
.ti { width: 26px; height: 26px; fill: none; stroke: #2f2f2f; stroke-width: 1.5; }
.faint { stroke: #dcdcdc; width: 24px; height: 24px; }
.undo { margin-left: 20px; } .redo { margin-left: 13px; }
.sq { margin-left: 22px; }
.inc { width: 28px; height: 28px; margin-left: 22px; }
.tim { width: 28px; height: 30px; margin-left: 22px; }
.fac { width: 103px; height: 22px; margin-left: 21px; border-radius: 4px; background: #757575; color: #fff; display: flex; align-items: center; font-size: 15.5px; letter-spacing: .18px; padding-left: 7px; }
.fac svg { width: 14px; height: 14px; margin-right: 4px; }
.ok { width: 20px; height: 20px; margin: 0 5px 0 17px; fill: none; stroke: #2f2f2f; stroke-width: 1.8; }
.saved { font-size: 16px; letter-spacing: .22px; color: #444; white-space: nowrap; padding-top: 1px; }
.right { margin-left: auto; display: flex; align-items: center; padding-right: 16px; }
.person { width: 24px; }
.cnt { font-size: 15px; margin: 0 21px 0 4px; color: #444; }
.share { width: 116px; height: 45px; border-radius: 5px; background: #ff0066; color: #fff; font-weight: 900; font-size: 18.5px; letter-spacing: .6px; display: flex; align-items: center; padding-left: 16px; margin-right: 22px; }
.share svg { width: 22px; height: 22px; margin-right: 10px; fill: none; stroke: #fff; stroke-width: 2; }
.tools { display: flex; gap: 24.2px; align-items: center; }
.tools .help { width: 28px; height: 28px; margin-left: -1px; }

/* free canvas */
.canvas { position: relative; overflow: hidden; background: #e2e2e2; }
.board { position: absolute; left: -68px; top: -197px; width: 1920px; height: 1100px; }
.board > * { position: absolute; }
.frame { background: #fff; }
.t { white-space: nowrap; line-height: 20px; }
.f-left { left: 0; top: 190px; width: 554px; height: 850px; }
.h12 { font-size: 12.5px; font-weight: 900; letter-spacing: .3px; }
.h19 { font-size: 18px; font-weight: 700; letter-spacing: .1px; }
.h18 { font-size: 18.5px; font-weight: 700; letter-spacing: .28px; }
.p11 { font-size: 10.5px; color: #444; letter-spacing: -.01px; }
.l1 { left: 68px; top: 192px; }
.l2 { left: 67px; top: 360px; }
.l3 { left: 68px; top: 385px; }
.l4 { left: 68px; top: 397px; }
.l5 { left: 66px; top: 423px; }
.l6 { left: 64px; top: 464px; }
.l7 { left: 70px; top: 485px; }
.l8 { left: 67px; top: 498px; }
.l9 { left: 67px; top: 510px; }
.l10 { left: 68px; top: 539px; }
.l11 { left: 66px; top: 562px; }
.l12 { left: 67px; top: 849px; }
.l13 { left: 68px; top: 872px; }
.f-mid { left: 600px; top: 190px; width: 893px; height: 778px; }
.strip { left: 600px; top: 197px; width: 893px; height: 13px; background: #eafbfc; }
.p-notes { left: 610px; top: 223px; width: 875px; height: 134px; background: #f5f5f5; border: 1px solid #ebebeb; }
.p-prob { left: 609px; top: 369px; width: 876px; height: 65px; border: 1.5px solid #f0f0f0; }
.lab { font-size: 11px; color: #3a3a3a; font-weight: 700; letter-spacing: .15px; }
.lb1 { left: 620px; top: 226px; } .lb2 { left: 619px; top: 373px; }
.prob { left: 619px; top: 396px; font-size: 13px; font-weight: 900; letter-spacing: .28px; color: #cf1a4a; }
.notes { left: 619px; top: 248px; display: flex; gap: 39.4px; }
.pack { display: grid; grid-template-columns: 45px 45px; grid-auto-rows: 45px; gap: 6px 5.5px; }
.cy { color: #9bedff; } .gr { color: #c7fe80; } .ye { color: #fcfe7d; } .pu { color: #e1bcfe; } .pi { color: #ffc2e8; } .og { color: #ffde87; }
.pack i { background: currentColor; }
.head { top: 456px; height: 29px; background: #000; color: #fff; font-size: 11px; font-weight: 900; letter-spacing: .22px; text-align: center; line-height: 28px; }
.hd-l { left: 614px; width: 419px; } .hd-r { left: 1065px; width: 418px; height: 30px; line-height: 29px; }
.axis { left: 1047px; top: 456px; width: 2.5px; height: 460px; background: #000; }
.tag { height: 18px; background: #b3b3b3; color: #fff; font-size: 9px; font-weight: 900; letter-spacing: .2px; line-height: 17px; text-align: center; white-space: nowrap; }
.a1 { left: 615px; top: 486px; width: 68px; } .a2 { left: 615px; top: 566px; width: 74px; } .a3 { left: 617px; top: 651px; width: 79px; }
.a4 { left: 615px; top: 729px; width: 62px; } .a5 { left: 615px; top: 811px; width: 89px; }
.z1 { left: 1416px; top: 489px; width: 68px; } .z2 { left: 1412px; top: 566px; width: 69px; } .z3 { left: 1396px; top: 651px; width: 85px; }
.z4 { left: 1409px; top: 733px; width: 72px; } .z5 { left: 1396px; top: 811px; width: 85px; }
.score { width: 52px; height: 72px; border: 1px dotted #222; padding: 12px 0 0 5px; color: #111; display: flex; flex-direction: column; white-space: nowrap; }
.score small { font-size: 5px; line-height: 10px; letter-spacing: .26px; }
.score b { font-size: 15.5px; line-height: 20px; font-weight: 400; margin-top: 7px; letter-spacing: .2px; }
.score em { font-size: 14px; line-height: 20px; font-style: normal; }
.score.up { padding-top: 6px; } .score.up b { margin-top: 11px; }
.sl { left: 983px; } .sr { left: 1064px; }
.s1 { top: 487px; } .s2 { top: 563px; } .s3 { top: 643px; } .s4 { top: 726px; } .s5 { top: 808px; }
.ln { height: 1.5px; background: #333; }
.n1 { left: 615px; top: 559px; width: 412px; height: 2px; background: #777; }
.n2 { left: 616px; top: 638px; width: 417px; } .n3 { left: 616px; top: 721px; width: 417px; } .n4 { left: 616px; top: 803px; width: 417px; height: 2px; background: #777; } .n5 { left: 616px; top: 884px; width: 417px; }
.m1 { left: 1067px; top: 560px; width: 412px; height: 2px; background: #777; }
.m2 { left: 1067px; top: 638px; width: 411px; height: 2px; background: #777; } .m3 { left: 1067px; top: 721px; width: 411px; height: 2px; background: #777; }
.m4 { left: 1067px; top: 804px; width: 411px; height: 2px; background: #777; } .m5 { left: 1069px; top: 885px; width: 405px; height: 2px; background: #888; }
.total { top: 892px; width: 137px; height: 46px; border: 1.5px solid; font-size: 18px; letter-spacing: .3px; line-height: 43px; text-align: center; background: #fff; }
.tg { left: 898px; color: #3fc51f; } .tr { left: 1064px; color: #cf1f4f; }
.f-swot { left: 1530px; top: 190px; width: 390px; height: 353px; }
.swot { left: 1538px; top: 196px; font-size: 9.5px; letter-spacing: -.04px; color: #333; white-space: nowrap; }
.swot p { line-height: 11.45px; padding-left: 15px; position: relative; }
.swot .li::before { content: ""; position: absolute; left: 9px; top: 5px; width: 2.4px; height: 2.4px; border-radius: 50%; background: #222; }
.swot h4 { font-weight: 400; font-size: 9.5px; line-height: 11.45px; margin-top: 12px; }
.swot h4.second { margin-top: 17.5px; }
.quad { left: 1749px; width: 200px; background: #eafbfc; border: 1.5px solid #444; }
.q1 { top: 180px; height: 38px; } .q2 { top: 231px; height: 264px; padding: 5px 8px; font-size: 16px; line-height: 20px; font-weight: 900; letter-spacing: .07px; }
.alt { left: 1530px; top: 506px; width: 390px; height: 37px; background: #eafbfc; padding-left: 19px; line-height: 36px; font-size: 12.5px; letter-spacing: .07px; }
.f-help { left: 1530px; top: 578px; width: 390px; height: 251px; }
.need { left: 1530px; top: 578px; width: 390px; height: 58px; overflow: hidden; background: #eafbfc; padding-left: 13px; line-height: 63px; font-size: 20px; letter-spacing: .4px; font-weight: 700; white-space: nowrap; }
.step { left: 1545px; top: 661px; font-size: 12.5px; letter-spacing: .06px; color: #333; }
.step b { font-weight: 900; color: #000; }
.matrix { left: 1544px; top: 688px; width: 435px; height: 114px; background: #000; display: grid; grid-template-columns: 31px 79px 106px 107px 106px; grid-template-rows: 24px 20px 20px 20.5px 21px; gap: 1.5px; font-size: 9.5px; color: #333; text-align: center; line-height: 20px; padding: 0 0 1px; }
.mh { grid-column: 2 / 6; grid-row: 1; color: #fff; font-size: 11px; letter-spacing: .13px; line-height: 26px; text-align: left; padding-left: 240px; white-space: nowrap; }
.lk { grid-row: 3 / 6; grid-column: 1; color: #fff; writing-mode: vertical-rl; transform: rotate(180deg); font-size: 12px; line-height: 31px; }
.c2 { grid-column: 2; } .c3 { grid-column: 3; } .c4 { grid-column: 4; } .c5 { grid-column: 5; }
.g1 { background: #e9e9e9; } .g2 { background: #cbcbcb; } .g3 { background: #b0b0b0; }
.mc { background: #eafbfc; } .mg { background: #f5ffee; } .my { background: #fffeea; } .mp { background: #faeeff; } .mk { background: #ffeef8; }

/* floating controls over the canvas */
.zoomer, .pct, .hand, .mini, .zset, .crew { position: absolute; }
.zoomer { left: 1635px; top: 599px; width: 126px; height: 16px; }
.pct { left: 1770px; top: 593px; width: 57px; height: 28px; border: 1.5px solid #aaa; border-radius: 4px; background: rgba(226,226,226,.75); color: #aaa; font-size: 17px; line-height: 28px; text-align: center; }
.hand { left: 1578px; top: 625px; width: 43px; height: 43px; border: 1.5px solid #a2a2a2; border-radius: 5px; background: rgba(236,236,236,.7); padding: 8px 9px; }
.hand svg { width: 22px; height: 24px; }
.mini { left: 1626px; top: 627px; width: 201px; height: 135px; }
.zset { left: 1627px; top: 767px; width: 200px; height: 42px; border: 1.5px solid #a2a2a2; border-radius: 5px; background: #e6e6e6; color: #9b9b9b; font-size: 18px; letter-spacing: .44px; display: flex; align-items: center; padding-left: 29px; white-space: nowrap; }
.zset svg { width: 18px; height: 18px; margin-right: 7px; }
.crew { left: 828.5px; top: 765px; display: flex; gap: 7.5px; }
.cb { position: relative; width: 50px; height: 50px; border-radius: 50%; background: #fff; border: 1.5px solid #777; display: flex; align-items: center; justify-content: center; }
.cb svg { width: 27px; height: 27px; }
.cb .pl { width: 18px; height: 18px; }
.hm { background: #9fe6a8; border: 0; font-size: 23px; padding-bottom: 2px; -webkit-text-stroke: .3px #000; }
.hm svg { position: absolute; left: 33px; top: 30px; width: 20px; height: 20px; }

/* taskbar */
.task { position: relative; z-index: 5; height: 50px; flex: none; background: #453a2b; display: flex; color: #fff; }
.start { width: 60px; display: flex; align-items: center; justify-content: center; }
.start svg { width: 20px; height: 20px; }
.find { width: 430px; background: #f1f1f1; border: 1px solid #b5b5b5; display: flex; align-items: center; padding-left: 14px; color: #2b2b2b; font-size: 17.5px; letter-spacing: .12px; white-space: nowrap; }
.find svg { width: 21px; height: 21px; margin-right: 14px; fill: none; stroke: #111; stroke-width: 1.4; }
.apps { display: flex; margin-left: -1px; }
.ap { position: relative; width: 61.9px; display: flex; align-items: center; justify-content: center; }
.ap svg { width: 30px; height: 30px; }
.ap.run::after { content: ""; position: absolute; left: 5px; right: 5px; bottom: 0; height: 3px; background: #ffd88a; }
.ap.on { background: #6b6358; } .ap.on::after { left: 0; right: 0; }
.tray { margin-left: auto; display: flex; align-items: center; }
.sun { width: 24px; height: 24px; border-radius: 50%; background: linear-gradient(135deg, #ffe070, #ff9500); margin-right: 13px; }
.temp { width: 56px; font-size: 17px; white-space: nowrap; }
.caret { width: 16px; height: 9px; fill: none; stroke: #fff; stroke-width: 1.5; margin-right: 8px; }
.sys { width: 160px; height: 48px; margin-right: -3px; }
.clock { width: 67px; display: flex; flex-direction: column; align-items: center; font-size: 14.5px; letter-spacing: -.18px; line-height: 22px; white-space: nowrap; }
.bell { width: 30px; height: 32px; margin: 3px 15px 0 24px; }
.peek { width: 6px; height: 50px; border-left: 1px solid #8a8277; }
.tip { position: absolute; left: 1627px; top: -16px; width: 147px; height: 45px; background: #fff; border: 1px solid #666; box-shadow: 3px 3px 3px rgba(0,0,0,.4); color: #575757; font-size: 14.5px; letter-spacing: -.25px; line-height: 20px; display: flex; flex-direction: column; padding: 2px 0 0 5px; white-space: nowrap; }
```
